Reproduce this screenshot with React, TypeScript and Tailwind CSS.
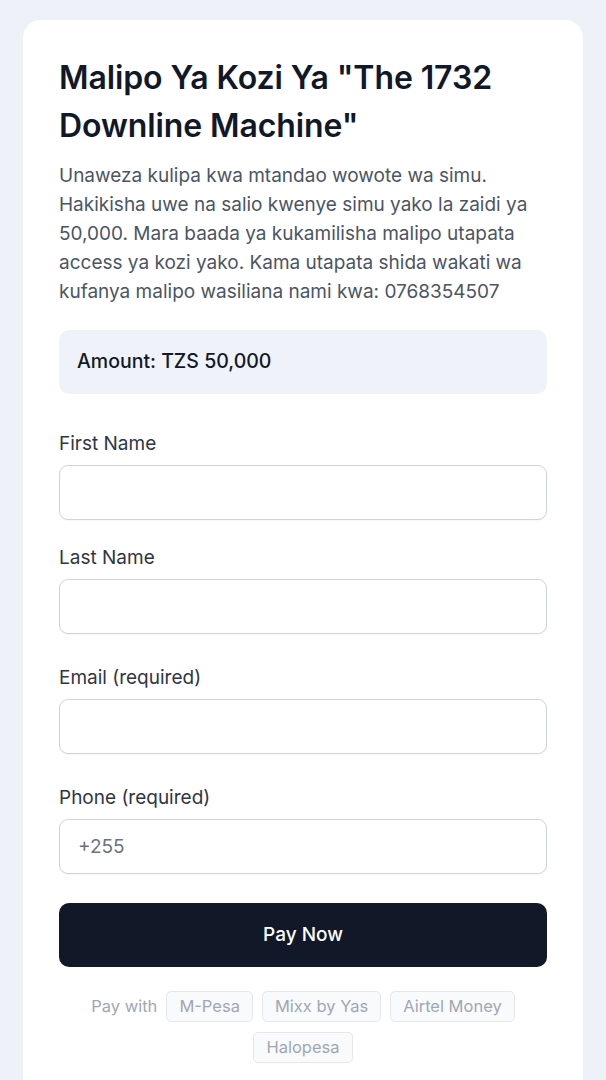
import React from "react";

const font = { fontFamily: "Inter, 'Noto Sans', sans-serif" };

function Field({ label, placeholder, className }: { label: string; placeholder?: string; className?: string }) {
  return (
    <div className={className}>
      <label className="block text-[19px] leading-[24px] text-[#2f3542]">{label}</label>
      <input
        placeholder={placeholder}
        className="mt-[9px] block h-[55px] w-full rounded-[9px] border border-[#cfd4dc] bg-white px-[18px] text-[19px] text-[#374151] placeholder:text-[#6b7280] shadow-[0_1px_2px_rgba(0,0,0,0.04)] outline-none"
      />
    </div>
  );
}

export default function App() {
  const chips = ["M-Pesa", "Mixx by Yas", "Airtel Money", "Halopesa"];
  return (
    <div className="min-h-screen bg-[#eef2f8] px-[23px] pt-[20px]" style={font}>
      <div className="rounded-[18px] bg-white px-[36px] pt-[54px] pb-[40px]">
        <h1 className="-mt-[20px] text-[32px] font-semibold leading-[48px] text-[#111827] tracking-[-0.1px]">
          Malipo Ya Kozi Ya "The 1732 Downline Machine"
        </h1>
        <p className="mt-[11px] text-[19px] leading-[29px] text-[#4b5563]">
          Unaweza kulipa kwa mtandao wowote wa simu. Hakikisha uwe na salio kwenye simu yako la zaidi ya 50,000. Mara baada ya kukamilisha malipo utapata access ya kozi yako. Kama utapata shida wakati wa kufanya malipo wasiliana nami kwa: 0768354507
        </p>
        <div className="mt-[24px] flex h-[64px] items-center rounded-[10px] bg-[#eff3f9] px-[18px]">
          <span className="text-[19.5px] font-medium text-[#111827]">Amount: TZS 50,000</span>
        </div>
        <Field label="First Name" className="mt-[38px]" />
        <Field label="Last Name" className="mt-[26px]" />
        <Field label="Email (required)" className="mt-[32px]" />
        <Field label="Phone (required)" placeholder="+255" className="mt-[32px]" />
        <button className="mt-[29px] flex h-[64px] w-full items-center justify-center rounded-[10px] bg-[#111827] text-[19px] font-medium text-white">
          Pay Now
        </button>
        <div className="mt-[24px] flex flex-wrap items-center justify-center gap-x-[9px] gap-y-[10px] px-[20px]">
          <span className="text-[16.5px] text-[#a0a7b4]">Pay with</span>
          {chips.map((c) => (
            <span
              key={c}
              className="flex h-[31px] items-center rounded-[5px] border border-[#e5e7eb] bg-[#f9fafb] px-[12px] text-[16.5px] text-[#a0a7b4]"
            >
              {c}
            </span>
          ))}
        </div>
      </div>
    </div>
  );
}
